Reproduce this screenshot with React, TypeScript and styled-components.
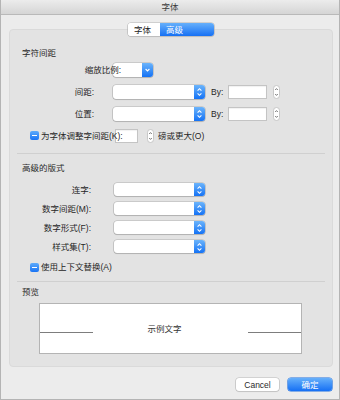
import React from "react";
import styled, { createGlobalStyle } from "styled-components";

const Global = createGlobalStyle`
  html, body { margin: 0; padding: 0; background: #ececec; }
  body {
    font-family: "Liberation Sans", "Noto Sans CJK SC", sans-serif;
    font-size: 8.5px;
    color: #262626;
  }
  * { box-sizing: border-box; }
`;

const Window = styled.div`
  width: 340px;
  height: 400px;
  display: flex;
  flex-direction: column;
  background: #ececec;
  border: 1px solid #b4b4b4;
  border-top: none;
  overflow: hidden;
`;

const TitleBar = styled.div`
  height: 15px;
  flex: none;
  display: flex;
  align-items: center;
  justify-content: center;
  background: linear-gradient(#ececec, #d5d5d5);
  border-bottom: 1px solid #b9b9b9;
  color: #3a3a3a;
  line-height: 12px;
`;

const Content = styled.div`
  display: flex;
  flex-direction: column;
  padding: 8px 6px 0 8px;
`;

const TabBar = styled.div`
  display: flex;
  justify-content: center;
  position: relative;
  z-index: 1;
  height: 13px;
`;

const Segmented = styled.div`
  display: flex;
  height: 13px;
  border-radius: 3px;
  overflow: hidden;
  background: #fff;
  box-shadow: 0 0 0 0.6px #b2b2b2, 0 1px 1px rgba(0, 0, 0, 0.12);
`;

const Seg = styled.div<{ $active?: boolean; $w: number }>`
  width: ${(p) => p.$w}px;
  padding-left: 6px;
  display: flex;
  align-items: center;
  line-height: 12px;
  background: ${(p) => (p.$active ? "linear-gradient(#66b0fb, #1670f4)" : "#fff")};
  color: ${(p) => (p.$active ? "#fff" : "#222")};
`;

const GroupBox = styled.div`
  margin-top: -7px;
  background: #e3e3e3;
  border: 1px solid #dadada;
  border-radius: 4px;
  padding: 17px 0 12px 0;
  display: flex;
  flex-direction: column;
`;

const SectionTitle = styled.div<{ $mt?: number }>`
  height: 12px;
  line-height: 12px;
  padding-left: 12px;
  margin-top: ${(p) => p.$mt ?? 0}px;
  color: #2a2a2a;
`;

const Row = styled.div<{ $h: number; $mt?: number }>`
  height: ${(p) => p.$h}px;
  margin-top: ${(p) => p.$mt ?? 0}px;
  display: flex;
  align-items: center;
`;

const Label = styled.span<{ $w: number }>`
  width: ${(p) => p.$w}px;
  flex: none;
  text-align: right;
  white-space: nowrap;
  line-height: 12px;
  position: relative;
  z-index: 1;
`;

const Popup = styled.div<{ $w: number; $ml: number; $h?: number }>`
  width: ${(p) => p.$w}px;
  height: ${(p) => p.$h ?? 14}px;
  margin-left: ${(p) => p.$ml}px;
  flex: none;
  display: flex;
  border-radius: 3px;
  overflow: hidden;
  background: #fff;
  box-shadow: 0 0 0 0.6px rgba(0, 0, 0, 0.22), 0 1px 1px rgba(0, 0, 0, 0.12);
`;

const PopupBody = styled.div`
  flex: 1;
`;

const PopupCap = styled.div`
  width: 11px;
  flex: none;
  display: flex;
  align-items: center;
  justify-content: center;
  background: linear-gradient(#6bb4fb, #1472f5);
`;

const InlineText = styled.span<{ $ml?: number; $w?: number }>`
  margin-left: ${(p) => p.$ml ?? 0}px;
  ${(p) => (p.$w ? `width: ${p.$w}px; flex: none;` : "")}
  white-space: nowrap;
  line-height: 12px;
  position: relative;
  z-index: 1;
`;

const Field = styled.div<{ $w: number; $ml: number }>`
  width: ${(p) => p.$w}px;
  height: 14px;
  margin-left: ${(p) => p.$ml}px;
  flex: none;
  background: #fff;
  border: 1px solid #c4c4c4;
  box-shadow: inset 0 1px 1px rgba(0, 0, 0, 0.06);
`;

const StepperWrap = styled.div<{ $ml: number }>`
  margin-left: ${(p) => p.$ml}px;
  width: 7px;
  height: 14px;
  flex: none;
  display: flex;
`;

const Check = styled.span`
  width: 9px;
  height: 9px;
  margin-left: 20px;
  flex: none;
  border-radius: 2px;
  background: linear-gradient(#5eabfb, #1a74f4);
  position: relative;
  &::after {
    content: "";
    position: absolute;
    left: 2px;
    right: 2px;
    top: 4px;
    height: 1.2px;
    background: #fff;
  }
`;

const Separator = styled.div<{ $mt: number }>`
  height: 1px;
  margin: ${(p) => p.$mt}px 7px 0 7px;
  background: #d0d0d0;
`;

const PreviewBox = styled.div`
  margin: 5px 0 0 29px;
  width: 263px;
  height: 51px;
  background: #fff;
  border: 1px solid #b4b4b4;
  display: grid;
  grid-template-columns: 53px 1fr 53px;
  align-items: center;
`;

const PreviewLine = styled.div`
  height: 1px;
  margin-top: 7px;
  background: #7d7d7d;
`;

const PreviewText = styled.div`
  text-align: center;
  padding-right: 12px;
  line-height: 12px;
  color: #333;
`;

const ButtonRow = styled.div`
  display: flex;
  justify-content: flex-end;
  gap: 9px;
  margin: 11px 1px 0 0;
`;

const Button = styled.div<{ $primary?: boolean; $w: number }>`
  width: ${(p) => p.$w}px;
  height: 13px;
  border-radius: 3px;
  display: flex;
  align-items: center;
  justify-content: center;
  line-height: 12px;
  ${(p) =>
    p.$primary
      ? `background: linear-gradient(#66b0fb, #1670f4); color: #fff; box-shadow: 0 0 0 0.6px #1d6fe0;`
      : `background: #fff; color: #2a2a2a; box-shadow: 0 0 0 0.6px #b8b8b8, 0 1px 1px rgba(0,0,0,0.12);`}
`;

const UpDown = () => (
  <svg width="11" height="14" viewBox="0 0 11 14">
    <path d="M3.6 5.6 L5.5 3.7 L7.4 5.6 M3.6 8.4 L5.5 10.3 L7.4 8.4" stroke="#fff" strokeWidth="1.1" fill="none" />
  </svg>
);

const DownOnly = () => (
  <svg width="11" height="14" viewBox="0 0 11 14">
    <path d="M3.6 6 L5.5 7.9 L7.4 6" stroke="#fff" strokeWidth="1.1" fill="none" />
  </svg>
);

const Stepper = ({ ml }: { ml: number }) => (
  <StepperWrap $ml={ml}>
    <svg width="7" height="14" viewBox="0 0 7 14">
      <rect x="0.5" y="0.5" width="6" height="13" rx="3" fill="#fff" stroke="#bdbdbd" strokeWidth="0.8" />
      <path d="M2.2 5 L3.5 3.6 L4.8 5 M2.2 9 L3.5 10.4 L4.8 9" stroke="#555" strokeWidth="0.8" fill="none" />
    </svg>
  </StepperWrap>
);

const SelectPopup = ({ w, ml, h }: { w: number; ml: number; h?: number }) => (
  <Popup $w={w} $ml={ml} $h={h}>
    <PopupBody />
    <PopupCap>
      <UpDown />
    </PopupCap>
  </Popup>
);

export default function App() {
  return (
    <>
      <Global />
      <Window>
        <TitleBar>字体</TitleBar>
        <Content>
          <TabBar>
            <Segmented>
              <Seg $w={32}>字体</Seg>
              <Seg $w={54} $active>
                高级
              </Seg>
            </Segmented>
          </TabBar>
          <GroupBox>
            <SectionTitle>字符间距</SectionTitle>
            <Row $h={22}>
              <Label $w={111}>缩放比例:</Label>
              <Popup $w={40} $ml={-8}>
                <PopupBody />
                <PopupCap>
                  <DownOnly />
                </PopupCap>
              </Popup>
            </Row>
            <Row $h={22}>
              <Label $w={84}>间距:</Label>
              <SelectPopup w={92} ml={19} />
              <InlineText $ml={6}>By:</InlineText>
              <Field $w={39} $ml={5} />
              <Stepper ml={6} />
            </Row>
            <Row $h={22}>
              <Label $w={84}>位置:</Label>
              <SelectPopup w={92} ml={19} />
              <InlineText $ml={6}>By:</InlineText>
              <Field $w={39} $ml={5} />
              <Stepper ml={6} />
            </Row>
            <Row $h={21}>
              <Check />
              <InlineText $ml={2} $w={74}>
                为字体调整字间距(K):
              </InlineText>
              <Field $w={23} $ml={0} />
              <Stepper ml={9} />
              <InlineText $ml={4}>磅或更大(O)</InlineText>
            </Row>
            <Separator $mt={7} />
            <SectionTitle $mt={8}>高级的版式</SectionTitle>
            <Row $h={19} $mt={6}>
              <Label $w={81}>连字:</Label>
              <SelectPopup w={91} ml={23} h={13} />
            </Row>
            <Row $h={19}>
              <Label $w={81}>数字间距(M):</Label>
              <SelectPopup w={91} ml={23} h={13} />
            </Row>
            <Row $h={19}>
              <Label $w={81}>数字形式(F):</Label>
              <SelectPopup w={91} ml={23} h={13} />
            </Row>
            <Row $h={19}>
              <Label $w={81}>样式集(T):</Label>
              <SelectPopup w={91} ml={23} h={13} />
            </Row>
            <Row $h={22}>
              <Check />
              <InlineText $ml={2}>使用上下文替换(A)</InlineText>
            </Row>
            <Separator $mt={3} />
            <SectionTitle $mt={4}>预览</SectionTitle>
            <PreviewBox>
              <PreviewLine />
              <PreviewText>示例文字</PreviewText>
              <PreviewLine />
            </PreviewBox>
          </GroupBox>
          <ButtonRow>
            <Button $w={43}>Cancel</Button>
            <Button $w={44} $primary>
              确定
            </Button>
          </ButtonRow>
        </Content>
      </Window>
    </>
  );
}
